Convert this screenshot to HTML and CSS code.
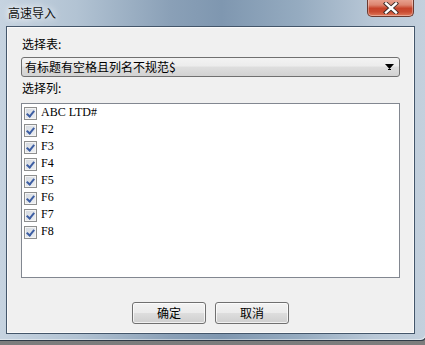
FILE: index.html
```html
<!DOCTYPE html>
<html lang="zh-CN">
<head>
<meta charset="utf-8">
<title>高速导入</title>
<link rel="stylesheet" href="styles.css">
</head>
<body>
<div class="window">
  <div class="titlebar">
    <span class="title">高速导入</span>
    <div class="close-btn">
      <svg width="20" height="12" viewBox="0 0 20 12">
        <path d="M5 1.5 L15 10.5 M15 1.5 L5 10.5" stroke="#3a2a28" stroke-width="4.2" stroke-linecap="square"/>
        <path d="M5 1.5 L15 10.5 M15 1.5 L5 10.5" stroke="#ffffff" stroke-width="2.4" stroke-linecap="square"/>
      </svg>
    </div>
  </div>
  <div class="client">
    <div class="label label-table">选择表:</div>
    <div class="combo">
      <span class="combo-text">有标题有空格且列名不规范$</span>
      <svg class="combo-arrow" width="9" height="6" viewBox="0 0 9 6"><path d="M0 0 H9 L4.5 5 Z" fill="#000"/><rect x="3" y="5" width="3" height="1" fill="#000"/></svg>
    </div>
    <div class="label label-cols">选择列:</div>
    <div class="listbox">
      <div class="row"><span class="cb"></span><span class="item">ABC LTD#</span></div>
      <div class="row"><span class="cb"></span><span class="item">F2</span></div>
      <div class="row"><span class="cb"></span><span class="item">F3</span></div>
      <div class="row"><span class="cb"></span><span class="item">F4</span></div>
      <div class="row"><span class="cb"></span><span class="item">F5</span></div>
      <div class="row"><span class="cb"></span><span class="item">F6</span></div>
      <div class="row"><span class="cb"></span><span class="item">F7</span></div>
      <div class="row"><span class="cb"></span><span class="item">F8</span></div>
    </div>
    <div class="buttons">
      <div class="btn">确定</div>
      <div class="btn">取消</div>
    </div>
  </div>
</div>
</body>
</html>
```
FILE: styles.css
```css
html, body {
  margin: 0;
  padding: 0;
}
body {
  width: 425px;
  height: 345px;
  background: linear-gradient(180deg, #5e5e5e 0%, #7d7d7d 100%);
  overflow: hidden;
  font-family: "Noto Sans CJK SC", "Noto Sans", sans-serif;
  font-size: 12px;
  color: #000;
}
.window {
  position: relative;
  width: 415px;
  height: 334px;
  padding: 0 5px 6px 6px;
  border-right: 1px solid #2f3a46;
  border-bottom: 1px solid #2f3a46;
  border-bottom-right-radius: 6px;
  background: linear-gradient(90deg, #c6d3e0 0%, #b2c3d3 18%, #8aa0b7 40%, #7f97b0 52%, #95abc0 70%, #b9c8d7 88%, #c3d0dd 100%);
  box-shadow: inset -1px -1px 0 rgba(255,255,255,0.45);
}
.titlebar {
  height: 26px;
  display: flex;
  align-items: flex-start;
}
.title {
  margin: 5px 0 0 2px;
  line-height: 16px;
  font-size: 12px;
  color: #111;
  text-shadow: 0 0 6px #fff, 0 0 10px rgba(255,255,255,0.9);
}
.close-btn {
  position: absolute;
  left: 367px;
  top: -1px;
  width: 45px;
  height: 17px;
  border: 1px solid #6b3a30;
  border-top: none;
  border-radius: 0 0 5px 5px;
  background: linear-gradient(180deg, #e9a594 0%, #dd8570 35%, #c7432a 55%, #c94b31 75%, #e07a5c 100%);
  box-shadow: inset 0 0 0 1px rgba(255,255,255,0.35);
  display: flex;
  align-items: center;
  justify-content: center;
}
.client {
  width: 379px;
  height: 306px;
  padding: 0 14px;
  border: 1px solid #44566a;
  background: #f0f0f0;
  box-shadow: inset 0 0 0 1px #fafafa;
  display: flex;
  flex-direction: column;
}
.label {
  height: 16px;
  line-height: 16px;
  padding-left: 1px;
}
.label-table {
  margin-top: 9px;
}
.combo {
  margin-top: 5px;
  height: 18px;
  border: 1px solid #707070;
  border-radius: 3px;
  background: linear-gradient(180deg, #f3f3f3 0%, #ececec 45%, #dedede 50%, #d2d2d2 100%);
  display: flex;
  align-items: center;
  padding: 0 5px 0 3px;
}
.combo-text {
  flex: 1;
  line-height: 16px;
}
.combo-arrow {
  display: block;
}
.label-cols {
  margin-top: 3px;
}
.listbox {
  margin-top: 7px;
  height: 172px;
  border: 1px solid #828790;
  background: #fff;
  padding-top: 1px;
}
.row {
  height: 17px;
  display: flex;
  align-items: center;
  padding-left: 2px;
}
.cb {
  width: 11px;
  height: 11px;
  border: 1px solid #8e8f8f;
  background: linear-gradient(135deg, #d3d8df 0%, #eef0f3 100%);
  box-shadow: inset 0 0 0 1px #f4f4f4;
  position: relative;
  flex: none;
}
.cb::after {
  content: "";
  position: absolute;
  left: 3px;
  top: 1px;
  width: 3px;
  height: 6px;
  border-right: 2px solid #3d5ea3;
  border-bottom: 2px solid #3d5ea3;
  transform: rotate(40deg);
}
.item {
  margin-left: 4px;
  font-family: "Liberation Serif", "Times New Roman", serif;
  font-size: 12px;
  line-height: 17px;
  position: relative;
  top: -1px;
}
.buttons {
  margin-top: 24px;
  display: flex;
  justify-content: center;
  gap: 9px;
}
.btn {
  width: 72px;
  height: 20px;
  border: 1px solid #707070;
  border-radius: 3px;
  background: linear-gradient(180deg, #f3f3f3 0%, #ebebeb 48%, #dddddd 52%, #cfcfcf 100%);
  box-shadow: inset 0 0 0 1px rgba(255,255,255,0.7);
  display: flex;
  align-items: center;
  justify-content: center;
  line-height: 16px;
}
```
